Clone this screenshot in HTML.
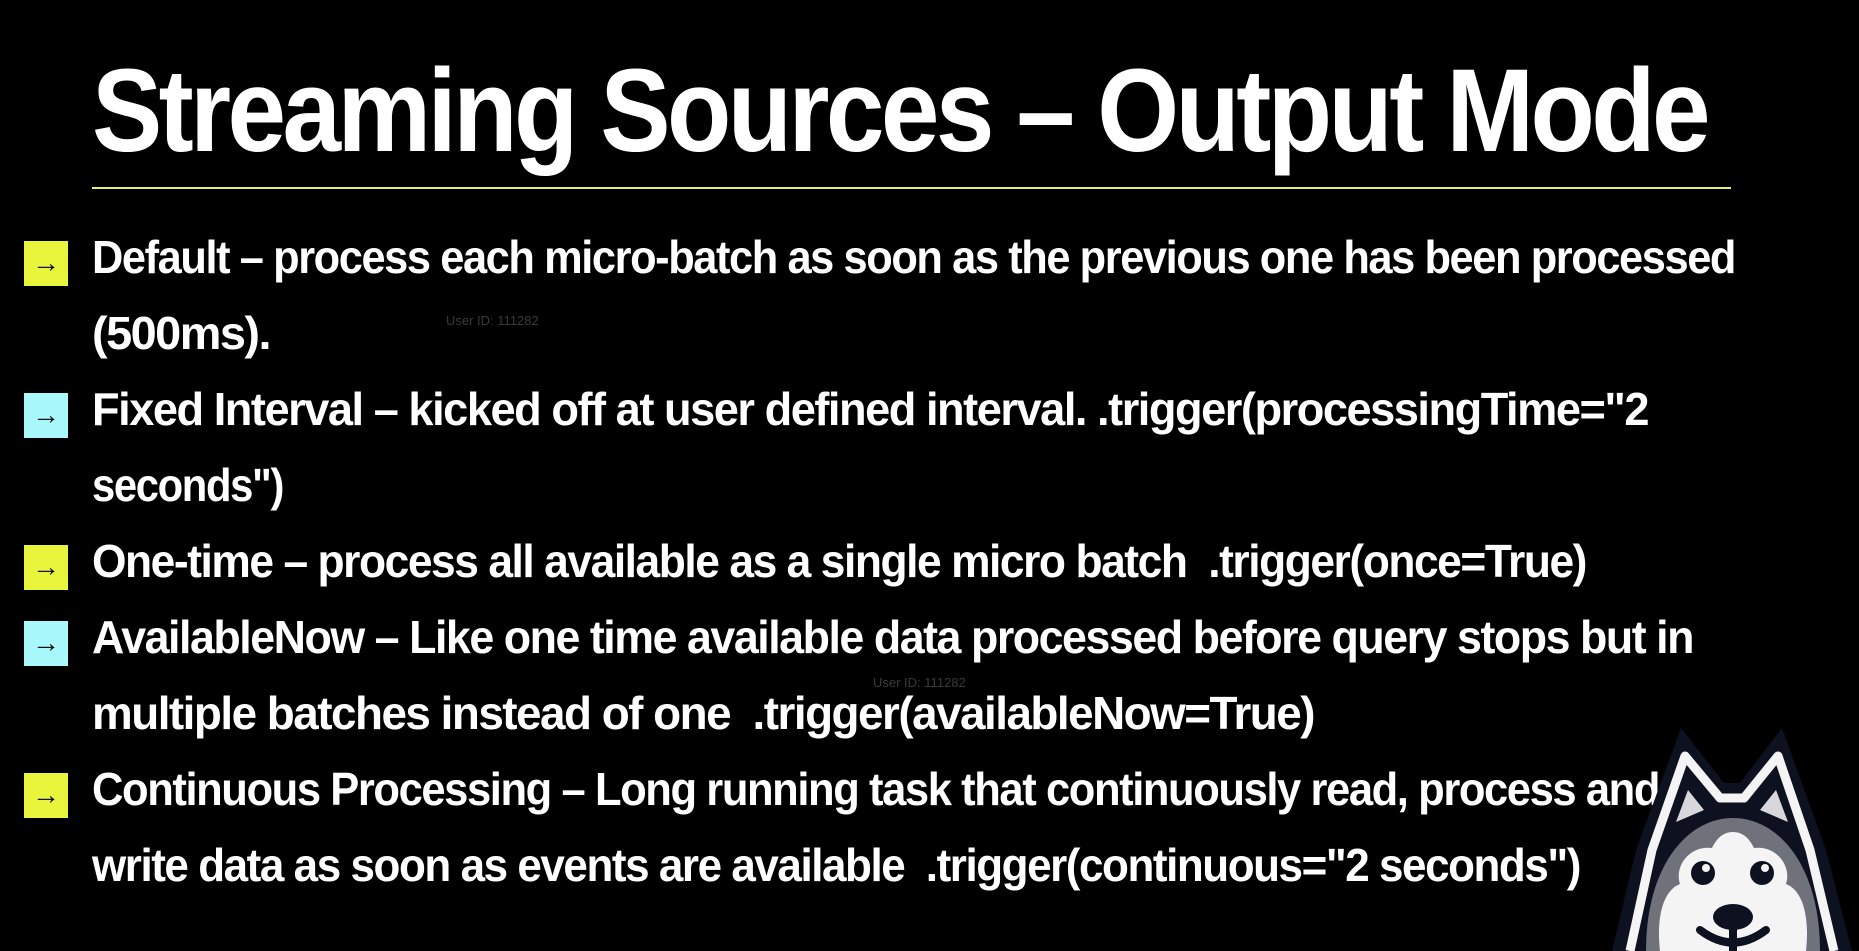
<!DOCTYPE html>
<html><head><meta charset="utf-8"><style>
html,body{margin:0;padding:0;background:#000;}
body{width:1859px;height:951px;position:relative;overflow:hidden;font-family:"Liberation Sans",sans-serif;color:#fff;}
.t{position:absolute;white-space:nowrap;font-weight:bold;transform-origin:0 0;line-height:1;}
.title{left:92px;top:52px;font-size:118px;letter-spacing:-4px;}
.rule{position:absolute;left:92px;top:187px;width:1639px;height:2px;background:#e4ee6a;}
.ln{font-size:46px;letter-spacing:-1.5px;}
.box{position:absolute;left:24px;width:44px;height:45px;color:#111;font-size:28px;font-weight:normal;line-height:43px;text-align:center;}
.y{background:#e8f53c;}.c{background:#a8f8fc;}
.wm{position:absolute;font-size:13px;color:#3a3a3a;white-space:nowrap;}
</style></head><body>
<div class="t title" id="title">Streaming Sources – Output Mode</div>
<div class="rule"></div>

<div class="box y" style="top:241px">→</div>
<div class="box c" style="top:393px">→</div>
<div class="box y" style="top:545px">→</div>
<div class="box c" style="top:621px">→</div>
<div class="box y" style="top:773px">→</div>

<div class="t ln" style="left:92px;top:234px">Default – process each micro-batch as soon as the previous one has been processed</div>
<div class="t ln" style="left:92px;top:310px">(500ms).</div>
<div class="t ln" style="left:92px;top:386px">Fixed Interval – kicked off at user defined interval. .trigger(processingTime="2</div>
<div class="t ln" style="left:92px;top:462px">seconds")</div>
<div class="t ln" style="left:92px;top:538px">One-time – process all available as a single micro batch&nbsp; .trigger(once=True)</div>
<div class="t ln" style="left:92px;top:614px">AvailableNow – Like one time available data processed before query stops but in</div>
<div class="t ln" style="left:92px;top:690px">multiple batches instead of one&nbsp; .trigger(availableNow=True)</div>
<div class="t ln" style="left:92px;top:766px">Continuous Processing – Long running task that continuously read, process and</div>
<div class="t ln" style="left:92px;top:842px">write data as soon as events are available&nbsp; .trigger(continuous="2 seconds")</div>

<div class="wm" style="left:446px;top:313px">User ID: 111282</div>
<div class="wm" style="left:873px;top:675px">User ID: 111282</div>

<svg width="1859" height="951" style="position:absolute;left:0;top:0">
<path d="M1612 951 L1636 850 L1681 728 L1724 783 L1740 783 L1782 728 L1826 850 L1852 951 Z" fill="#0d1120"/>
<path d="M1630 951 L1652 850 L1685 756 L1720 798 L1744 798 L1778 756 L1810 850 L1834 951" fill="none" stroke="#f4f4f4" stroke-width="9" stroke-linejoin="round"/>
<path d="M1676 822 L1688 790 L1704 810 Z M1788 822 L1776 790 L1760 810 Z" fill="#d8d8dc"/>
<path d="M1646 951 C1646 865 1688 818 1733 818 C1778 818 1820 865 1820 951 Z" fill="#6f727a"/>
<path d="M1660 951 C1656 915 1664 890 1680 884 C1674 866 1690 845 1712 848 C1716 840 1722 832 1733 832 C1744 832 1750 840 1754 848 C1776 845 1792 866 1786 884 C1802 890 1810 915 1806 951 Z" fill="#f4f4f4"/>
<circle cx="1703" cy="873" r="12" fill="#0d1120"/><circle cx="1762" cy="873" r="12" fill="#0d1120"/>
<circle cx="1706" cy="868" r="4" fill="#f4f4f4"/><circle cx="1765" cy="868" r="4" fill="#f4f4f4"/>
<ellipse cx="1733" cy="917" rx="20" ry="13" fill="#0d1120"/>
<path d="M1700 930 Q1733 955 1766 930" fill="none" stroke="#0d1120" stroke-width="8" stroke-linecap="round"/>
<rect x="1729" y="920" width="8" height="31" fill="#0d1120"/>
</svg>
<script>
(function(){
var targets=[1615,1643,178,1556,191,1494,1601,1222,1567,1488];
var els=document.querySelectorAll('.t');
for(var i=0;i<els.length;i++){var w=els[i].getBoundingClientRect().width;if(w>0)els[i].style.transform='scaleX('+(targets[i]/w)+')';}
})();
</script>
</body></html>
